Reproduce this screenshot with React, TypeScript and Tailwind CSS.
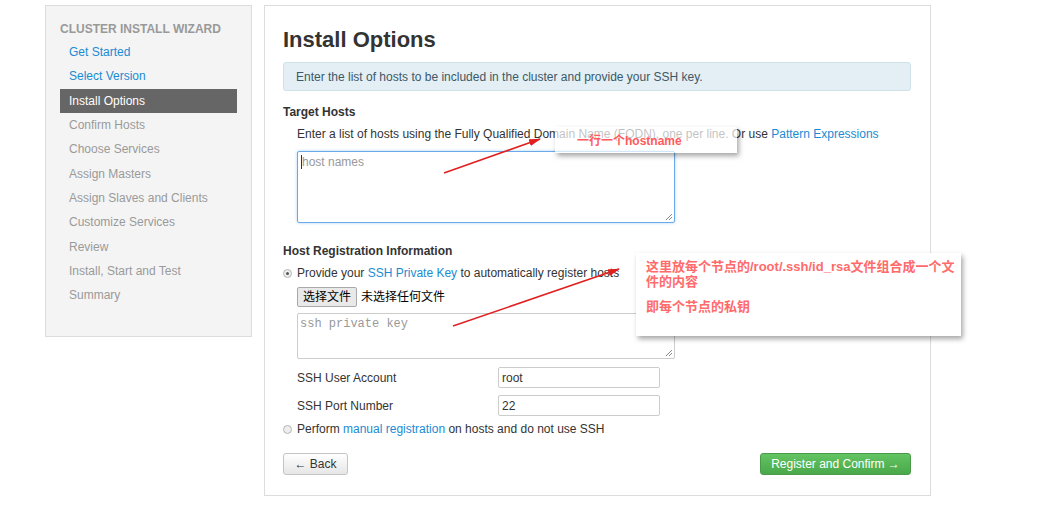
import { ReactElement } from "react";

const steps: { label: string; state: "done" | "active" | "todo" }[] = [
  { label: "Get Started", state: "done" },
  { label: "Select Version", state: "done" },
  { label: "Install Options", state: "active" },
  { label: "Confirm Hosts", state: "todo" },
  { label: "Choose Services", state: "todo" },
  { label: "Assign Masters", state: "todo" },
  { label: "Assign Slaves and Clients", state: "todo" },
  { label: "Customize Services", state: "todo" },
  { label: "Review", state: "todo" },
  { label: "Install, Start and Test", state: "todo" },
  { label: "Summary", state: "todo" },
];

const font = "font-['Liberation_Sans','Noto_Sans_CJK_SC',sans-serif]";

function Radio({ checked }: { checked: boolean }): ReactElement {
  return (
    <span className="w-[9px] h-[9px] rounded-full border border-[#b5b5b5] bg-[#eee] flex items-center justify-center shrink-0">
      {checked && <span className="w-[3px] h-[3px] rounded-full bg-[#555]" />}
    </span>
  );
}

function Resize(): ReactElement {
  return (
    <svg className="absolute right-[1px] bottom-[1px]" width="8" height="8" viewBox="0 0 8 8">
      <path d="M7 1L1 7M7 4L4 7" stroke="#888" strokeWidth="1" />
    </svg>
  );
}

export default function App(): ReactElement {
  return (
    <div className={`relative w-[1037px] h-[520px] bg-white text-[12px] text-[#333] ${font}`}>
      <div className="flex items-start gap-[12px] pl-[45px] pt-[5px]">
        {/* sidebar */}
        <div className="w-[207px] h-[332px] bg-[#f4f4f4] border border-[#dcdcdc] pt-[16px] px-[14px]">
          <div className="text-[12px] font-bold text-[#999] uppercase leading-[14px] mb-[4px]">Cluster Install Wizard</div>
          <ul>
            {steps.map((s) => (
              <li
                key={s.label}
                className={`h-[24.3px] flex items-center pl-[9px] ${
                  s.state === "active"
                    ? "bg-[#666] text-white"
                    : s.state === "done"
                    ? "text-[#1a8bd3]"
                    : "text-[#9a9a9a]"
                }`}
              >
                {s.label}
              </li>
            ))}
          </ul>
        </div>

        {/* main */}
        <div className="w-[667px] h-[491px] border border-[#dcdcdc] pl-[18px] pr-[19px] pt-[21px]">
          <h1 className="text-[22px] font-bold leading-[26px] text-[#333]">Install Options</h1>
          <div className="mt-[9px] h-[29px] bg-[#e3eff5] border border-[#cfe1e9] rounded-[3px] flex items-center pl-[12px] text-[#3d5866]">
            Enter the list of hosts to be included in the cluster and provide your SSH key.
          </div>

          <div className="mt-[13px] font-bold leading-[16px]">Target Hosts</div>
          <div className="mt-[6px] pl-[14px] leading-[16px] whitespace-nowrap">
            Enter a list of hosts using the Fully Qualified Domain Name (FQDN), one per line. Or use{" "}
            <span className="text-[#1a8bd3]">Pattern Expressions</span>
          </div>
          <div className="relative ml-[14px] mt-[9px] w-[378px] h-[72px] border border-[#6aaae8] rounded-[2px] shadow-[0_0_3px_rgba(82,168,236,0.5)] px-[3px] pt-[2px] text-[#999] leading-[16px]">
            <span className="border-l border-[#333]">host names</span>
            <Resize />
          </div>

          <div className="mt-[20px] font-bold leading-[16px]">Host Registration Information</div>
          <div className="mt-[6px] flex items-center gap-[5px] leading-[16px]">
            <Radio checked />
            <span>
              Provide your <span className="text-[#1a8bd3]">SSH Private Key</span> to automatically register hosts
            </span>
          </div>
          <div className="ml-[14px] mt-[6px] flex items-center h-[20px]">
            <span className="h-[20px] px-[5px] border border-[#a9a9a9] rounded-[2px] bg-[#e9e9e9] flex items-center text-black">选择文件</span>
            <span className="ml-[4px] text-black">未选择任何文件</span>
          </div>
          <div className="relative ml-[14px] mt-[6px] w-[378px] h-[46px] border border-[#ccc] rounded-[2px] px-[2px] pt-[1px] text-[12px] text-[#999] font-['Liberation_Mono',monospace]">
            ssh private key
            <Resize />
          </div>

          <div className="ml-[14px] mt-[8px] flex items-center h-[21px]">
            <span className="w-[201px]">SSH User Account</span>
            <span className="w-[162px] h-[21px] border border-[#ccc] rounded-[2px] flex items-center pl-[3px]">root</span>
          </div>
          <div className="ml-[14px] mt-[7px] flex items-center h-[21px]">
            <span className="w-[201px]">SSH Port Number</span>
            <span className="w-[162px] h-[21px] border border-[#ccc] rounded-[2px] flex items-center pl-[3px]">22</span>
          </div>

          <div className="mt-[5px] flex items-center gap-[5px] leading-[16px]">
            <Radio checked={false} />
            <span>
              Perform <span className="text-[#1a8bd3]">manual registration</span> on hosts and do not use SSH
            </span>
          </div>

          <div className="mt-[16px] flex justify-between">
            <button className="h-[22px] w-[65px] border border-[#c4c4c4] rounded-[3px] bg-gradient-to-b from-white to-[#e6e6e6] text-[#333] text-[12px]">
              ← Back
            </button>
            <button className="h-[22px] w-[151px] border border-[#4a9a4a] rounded-[3px] bg-gradient-to-b from-[#62c462] to-[#4aa84a] text-white text-[12px]">
              Register and Confirm →
            </button>
          </div>
        </div>
      </div>

      {/* annotations */}
      <div className="absolute left-[555px] top-[127px] w-[182px] h-[26px] bg-white/70 shadow-[2px_3px_5px_rgba(0,0,0,0.35)] pl-[22px] pt-[5px] text-[12px] font-bold text-[#ff5a5a]">
        一行一个hostname
      </div>
      <div className="absolute left-[636px] top-[253px] w-[325px] h-[83px] bg-white shadow-[2px_3px_5px_rgba(0,0,0,0.35)] pl-[10px] pt-[6px] text-[13px] font-bold leading-[15px] text-[#ff6b6b]">
        <div className="whitespace-nowrap">这里放每个节点的/root/.ssh/id_rsa文件组合成一个文</div>
        <div>件的内容</div>
        <div className="mt-[10px]">即每个节点的私钥</div>
      </div>
      <svg className="absolute left-0 top-0 pointer-events-none" width="1037" height="520">
        <defs>
          <marker id="ah" markerWidth="12" markerHeight="7" refX="11" refY="3.5" orient="auto" markerUnits="userSpaceOnUse">
            <path d="M0 0L12 3.5L0 7Z" fill="#e02020" />
          </marker>
        </defs>
        <line x1="444" y1="173" x2="540" y2="139" stroke="#e02020" strokeWidth="1.5" markerEnd="url(#ah)" />
        <line x1="453" y1="326" x2="619" y2="269" stroke="#e02020" strokeWidth="1.5" markerEnd="url(#ah)" />
      </svg>
    </div>
  );
}
